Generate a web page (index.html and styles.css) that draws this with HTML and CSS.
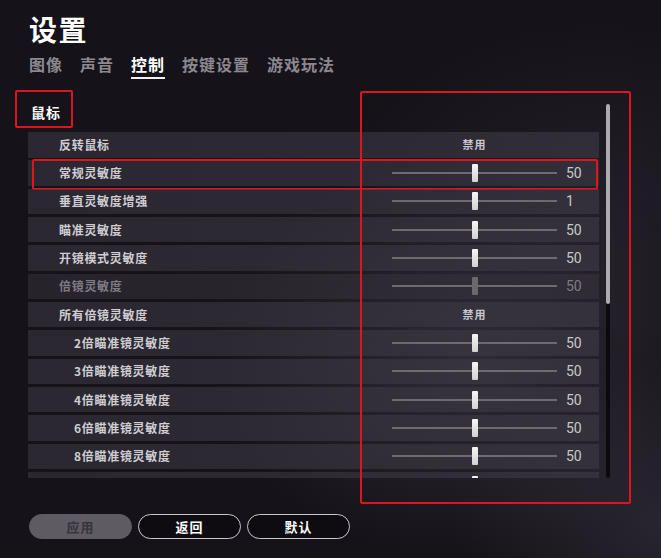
FILE: index.html
```html
<!DOCTYPE html>
<html lang="zh-CN">
<head>
  <meta charset="UTF-8">
  <title>设置</title>
  <link rel="stylesheet" href="styles.css">
</head>
<body>
  <div class="screen">
    <h1 class="title">设置</h1>
    <nav class="tabs">
      <span class="tab">图像</span>
      <span class="tab">声音</span>
      <span class="tab active">控制</span>
      <span class="tab">按键设置</span>
      <span class="tab">游戏玩法</span>
    </nav>

    <div class="panel">
      <div class="scroll">
        <div class="section-title">鼠标</div>

        <div class="row">
          <span class="label">反转鼠标</span>
          <span class="toggle">禁用</span>
          <span></span>
        </div>
        <div class="row">
          <span class="label">常规灵敏度</span>
          <div class="slider"><b class="thumb"></b></div>
          <span class="value">50</span>
          <i class="mark mark-row"></i>
        </div>
        <div class="row">
          <span class="label">垂直灵敏度增强</span>
          <div class="slider"><b class="thumb"></b></div>
          <span class="value">1</span>
        </div>
        <div class="row">
          <span class="label">瞄准灵敏度</span>
          <div class="slider"><b class="thumb"></b></div>
          <span class="value">50</span>
        </div>
        <div class="row">
          <span class="label">开镜模式灵敏度</span>
          <div class="slider"><b class="thumb"></b></div>
          <span class="value">50</span>
        </div>
        <div class="row disabled">
          <span class="label">倍镜灵敏度</span>
          <div class="slider"><b class="thumb"></b></div>
          <span class="value">50</span>
        </div>
        <div class="row">
          <span class="label">所有倍镜灵敏度</span>
          <span class="toggle">禁用</span>
          <span></span>
        </div>
        <div class="row">
          <span class="label indent">2倍瞄准镜灵敏度</span>
          <div class="slider"><b class="thumb"></b></div>
          <span class="value">50</span>
        </div>
        <div class="row">
          <span class="label indent">3倍瞄准镜灵敏度</span>
          <div class="slider"><b class="thumb"></b></div>
          <span class="value">50</span>
        </div>
        <div class="row">
          <span class="label indent">4倍瞄准镜灵敏度</span>
          <div class="slider"><b class="thumb"></b></div>
          <span class="value">50</span>
        </div>
        <div class="row">
          <span class="label indent">6倍瞄准镜灵敏度</span>
          <div class="slider"><b class="thumb"></b></div>
          <span class="value">50</span>
        </div>
        <div class="row">
          <span class="label indent">8倍瞄准镜灵敏度</span>
          <div class="slider"><b class="thumb"></b></div>
          <span class="value">50</span>
        </div>
        <div class="row">
          <span class="label indent">16倍瞄准镜灵敏度</span>
          <div class="slider"><b class="thumb"></b></div>
          <span class="value">50</span>
        </div>
      </div>
      <div class="scrollbar"><div class="scrollbar-thumb"></div></div>
    </div>

    <div class="actions">
      <button class="btn btn-apply">应用</button>
      <button class="btn">返回</button>
      <button class="btn">默认</button>
    </div>

    <i class="mark mark-section"></i>
    <i class="mark mark-column"></i>
  </div>
</body>
</html>
```

FILE: styles.css
```css
body {
  margin: 0;
  background:
    radial-gradient(ellipse 260px 200px at 470px 360px, rgba(78, 74, 86, 0.45), transparent 100%),
    radial-gradient(ellipse 200px 160px at 660px 520px, rgba(70, 66, 78, 0.4), transparent 100%),
    radial-gradient(ellipse 260px 180px at 600px 200px, rgba(60, 56, 68, 0.3), transparent 100%),
    #15121a;
  color: #fff;
  font-family: "Noto Sans CJK SC", "Noto Sans", sans-serif;
}

.screen {
  position: relative;
  height: 558px;
  box-sizing: border-box;
  padding: 15px 0 0 28px;
  overflow: hidden;
}

.title {
  margin: 0 0 0 1px;
  font-size: 28px;
  line-height: 28px;
  font-weight: 700;
  letter-spacing: 1.5px;
}

.tabs {
  display: flex;
  gap: 17px;
  margin-top: 13px;
  margin-left: 1px;
}
.tab {
  font-size: 16px;
  line-height: 16px;
  font-weight: 700;
  letter-spacing: 1px;
  color: #8b8890;
  padding-bottom: 5px;
  border-bottom: 2px solid transparent;
}
.tab.active {
  color: #fff;
  border-bottom-color: #f2f2f2;
}

.panel {
  display: flex;
  gap: 7px;
  margin-top: 23px;
}
.scroll {
  width: 571px;
  height: 376px;
  overflow: hidden;
}
.scrollbar {
  width: 4px;
  height: 374px;
  margin-top: 2px;
  background: #0c0a0f;
  border-radius: 2px;
}
.scrollbar-thumb {
  height: 200px;
  background: #adabb1;
  border-radius: 2px;
}

.section-title {
  height: 30px;
  line-height: 21px;
  padding-left: 3px;
  font-size: 14px;
  font-weight: 700;
  letter-spacing: 1px;
}

.row {
  position: relative;
  display: grid;
  grid-template-columns: 1fr 165px 42px;
  align-items: center;
  height: 25.5px;
  margin-bottom: 2.83px;
  background: linear-gradient(90deg, rgba(56, 53, 63, 0.62), rgba(62, 59, 70, 0.6));
}
.label {
  padding-left: 31px;
  padding-bottom: 1px;
  font-size: 12px;
  font-weight: 700;
  letter-spacing: 0.7px;
  color: #cfcdd2;
  white-space: nowrap;
}
.label.indent {
  padding-left: 46px;
}
.toggle {
  text-align: center;
  padding-bottom: 1px;
  font-size: 11px;
  font-weight: 700;
  letter-spacing: 1px;
  color: #c9c7cc;
}
.slider {
  position: relative;
  height: 18px;
}
.slider::before {
  content: "";
  position: absolute;
  left: 0;
  right: 0;
  top: 50%;
  height: 2px;
  margin-top: -1px;
  background: #6d6b72;
}
.thumb {
  position: absolute;
  left: 50%;
  top: 0;
  width: 6px;
  height: 18px;
  margin-left: -3px;
  border-radius: 1px;
  background: linear-gradient(#f6f6f6, #d2d2d4);
}
.value {
  padding-left: 9px;
  font-family: Roboto, "Liberation Sans", sans-serif;
  font-size: 14px;
  color: #c9c7cc;
}

.row.disabled {
  background: linear-gradient(90deg, rgba(50, 47, 56, 0.6), rgba(54, 51, 60, 0.6));
}
.row.disabled .label,
.row.disabled .value {
  color: #7e7b83;
}
.row.disabled .thumb {
  background: #6b696f;
}

.actions {
  display: flex;
  gap: 6px;
  margin-top: 36px;
  margin-left: 1px;
}
.btn {
  width: 103px;
  height: 25px;
  box-sizing: border-box;
  border: 1.5px solid #c9c7cc;
  border-radius: 13px;
  background: #0e0c11;
  color: #fff;
  font-family: "Noto Sans CJK SC", sans-serif;
  font-size: 13px;
  font-weight: 700;
  letter-spacing: 1px;
  padding: 0;
}
.btn-apply {
  background: #5f5b63;
  border-color: #5f5b63;
  color: #37343c;
}

/* red annotation boxes */
.mark {
  position: absolute;
  box-sizing: border-box;
  border: 2px solid #e0141c;
  border-radius: 2px;
  pointer-events: none;
}
.mark-section {
  left: 15px;
  top: 90px;
  width: 58px;
  height: 38px;
}
.mark-row {
  left: 4px;
  right: 1px;
  top: -1px;
  bottom: -4px;
}
.mark-column {
  left: 360px;
  top: 91px;
  width: 271px;
  height: 413px;
}
```
